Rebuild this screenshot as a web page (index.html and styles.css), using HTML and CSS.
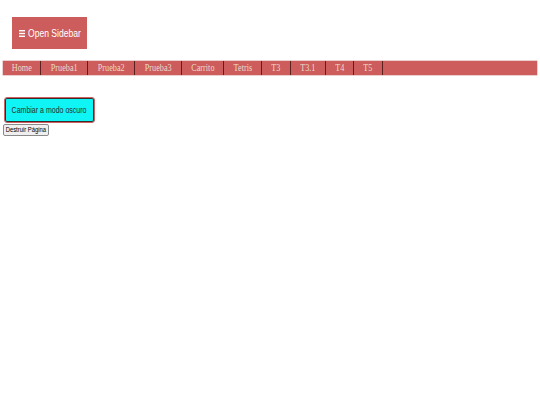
FILE: index.html
```html
<!DOCTYPE html>
<html lang="es">
<head>
<meta charset="utf-8">
<title>Inicio</title>
<link rel="stylesheet" href="styles.css">
</head>
<body>
  <div class="top">
    <button class="sidebar-btn">
      <svg class="burger" width="6" height="7" viewBox="0 0 6 7" aria-hidden="true">
        <rect x="0" y="0" width="6" height="1.4" fill="#fff"/>
        <rect x="0" y="2.8" width="6" height="1.4" fill="#fff"/>
        <rect x="0" y="5.6" width="6" height="1.4" fill="#fff"/>
      </svg>
      <span class="squish squish-left">Open Sidebar</span>
    </button>
  </div>
  <nav class="navbar">
    <a class="nav-item" href="#"><span class="squish">Home</span></a>
    <a class="nav-item" href="#"><span class="squish">Prueba1</span></a>
    <a class="nav-item" href="#"><span class="squish">Prueba2</span></a>
    <a class="nav-item" href="#"><span class="squish">Prueba3</span></a>
    <a class="nav-item" href="#"><span class="squish">Carrito</span></a>
    <a class="nav-item" href="#"><span class="squish">Tetris</span></a>
    <a class="nav-item" href="#"><span class="squish">T3</span></a>
    <a class="nav-item" href="#"><span class="squish">T3.1</span></a>
    <a class="nav-item" href="#"><span class="squish">T4</span></a>
    <a class="nav-item" href="#"><span class="squish">T5</span></a>
  </nav>
  <div class="actions">
    <button class="mode-btn"><span class="squish">Cambiar a modo oscuro</span></button>
    <button class="destroy-btn"><span class="squish">Destruir Página</span></button>
  </div>
</body>
</html>
```

FILE: styles.css
```css
html, body {
  margin: 0;
  padding: 0;
  background: #ffffff;
}

body {
  width: 540px;
  height: 405px;
  overflow: hidden;
}

.squish {
  display: inline-block;
  white-space: nowrap;
  transform: scaleX(0.78);
  transform-origin: center;
}

.squish-left {
  transform-origin: left center;
}

.top {
  padding: 17px 0 0 12px;
}

.sidebar-btn {
  display: flex;
  align-items: center;
  justify-content: flex-start;
  width: 75px;
  height: 32px;
  margin: 0;
  padding: 0 0 0 7px;
  border: none;
  background: #cd5c5c;
  color: #ffffff;
  font-family: "Liberation Sans", Arial, sans-serif;
  font-size: 11px;
  cursor: pointer;
  overflow: hidden;
}

.sidebar-btn .burger {
  flex: none;
  margin-right: 3px;
}

.navbar {
  display: grid;
  grid-template-columns: 38px 47px 47px 47px 42px 38px 29px 35px 28px 29px;
  margin: 12px 3px 0 3px;
  height: 14px;
  background: #cd5c5c;
  box-shadow: 0 0 0 0.5px #d9a0a0;
}

.nav-item {
  display: flex;
  align-items: center;
  justify-content: center;
  border-right: 1px solid #5e1f1f;
  color: #eadbc8;
  text-decoration: none;
  font-family: "Liberation Serif", "Times New Roman", serif;
  font-size: 10.5px;
  line-height: 14px;
}

.actions {
  display: flex;
  flex-direction: column;
  align-items: flex-start;
  padding: 22px 0 0 3px;
}

.mode-btn {
  display: flex;
  align-items: center;
  justify-content: center;
  margin: 0 0 1px 1px;
  width: 91px;
  height: 26px;
  padding: 0;
  background: #0ff4f4;
  border: 1px solid #d06060;
  box-shadow: inset 0 0 0 1px #3a2a2a;
  border-radius: 3px;
  color: #2e2e2e;
  font-family: "Liberation Sans", Arial, sans-serif;
  font-size: 9px;
}

.destroy-btn {
  display: flex;
  align-items: center;
  justify-content: center;
  margin: 0;
  width: 46px;
  height: 12px;
  padding: 0;
  background: #efefef;
  border: 1px solid #8a8a8a;
  border-radius: 2px;
  color: #000000;
  font-family: "Liberation Sans", Arial, sans-serif;
  font-size: 7.5px;
  line-height: 10px;
}
```
